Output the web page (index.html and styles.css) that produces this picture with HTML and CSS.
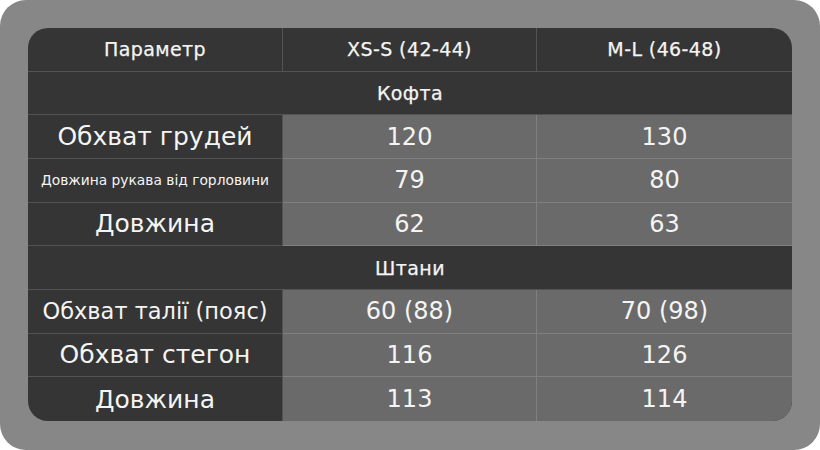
FILE: index.html
```html
<!DOCTYPE html>
<html lang="uk">
<head>
<meta charset="utf-8">
<title>Розмірна сітка</title>
<link rel="stylesheet" href="styles.css">
</head>
<body>
<div class="frame">
  <div class="table">
    <div class="cell head">Параметр</div>
    <div class="cell head">XS-S (42-44)</div>
    <div class="cell head last">M-L (46-48)</div>

    <div class="cell section">Кофта</div>

    <div class="cell label">Обхват грудей</div>
    <div class="cell val">120</div>
    <div class="cell val last">130</div>

    <div class="cell label small">Довжина рукава від горловини</div>
    <div class="cell val">79</div>
    <div class="cell val last">80</div>

    <div class="cell label">Довжина</div>
    <div class="cell val">62</div>
    <div class="cell val last">63</div>

    <div class="cell section">Штани</div>

    <div class="cell label mid">Обхват талії (пояс)</div>
    <div class="cell val">60 (88)</div>
    <div class="cell val last">70 (98)</div>

    <div class="cell label">Обхват стегон</div>
    <div class="cell val">116</div>
    <div class="cell val last">126</div>

    <div class="cell label bottom">Довжина</div>
    <div class="cell val bottom">113</div>
    <div class="cell val last bottom">114</div>
  </div>
</div>
</body>
</html>
```
FILE: styles.css
```css
html, body {
  margin: 0;
  padding: 0;
  background: #ffffff;
}

body {
  font-family: "DejaVu Sans", "Noto Sans", sans-serif;
  color: #f4f4f4;
}

.frame {
  width: 820px;
  height: 450px;
  box-sizing: border-box;
  background: #878787;
  border-radius: 26px;
  padding: 28px 28px 29px 28px;
}

.table {
  width: 764px;
  height: 393px;
  display: grid;
  grid-template-columns: 255px 254px 255px;
  grid-template-rows: repeat(9, 1fr);
  background: #353535;
  border-radius: 20px;
  overflow: hidden;
}

.cell {
  display: flex;
  align-items: center;
  justify-content: center;
  white-space: nowrap;
  border-bottom: 1px solid rgba(255, 255, 255, 0.15);
  border-right: 1px solid rgba(255, 255, 255, 0.15);
  box-sizing: border-box;
}

.cell.last {
  border-right: none;
}

.cell.bottom {
  border-bottom: none;
}

.head,
.section {
  font-size: 19px;
  letter-spacing: 0.4px;
  -webkit-text-stroke: 0.25px #f4f4f4;
}

.section {
  grid-column: 1 / -1;
  border-right: none;
}

.label {
  font-size: 25px;
}

.label.mid {
  font-size: 22.5px;
}

.label.small {
  font-size: 13.8px;
}

.val {
  background: #6a6a6a;
  font-size: 24px;
}
```
